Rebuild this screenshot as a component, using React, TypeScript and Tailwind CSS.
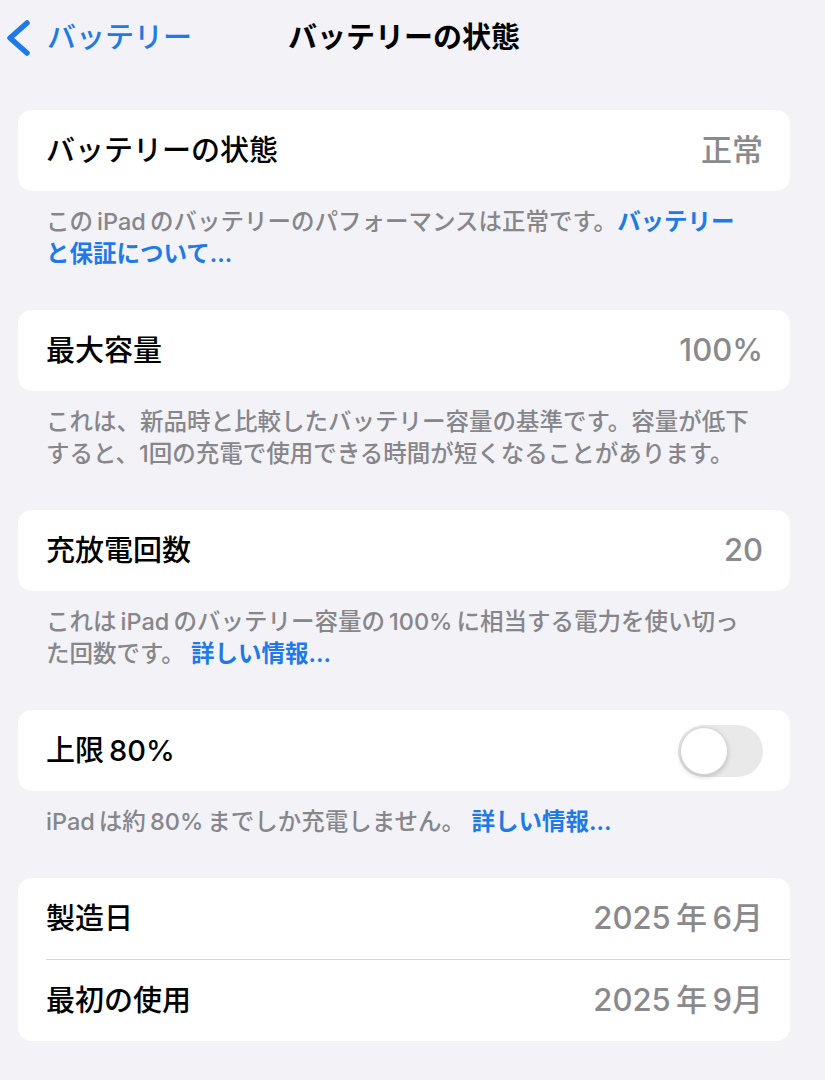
import React from 'react';

const FONT = { fontFamily: 'Inter, "Noto Sans CJK JP", sans-serif' };

function Row({ label, value, children }: { label: string; value?: string; children?: React.ReactNode }) {
  return (
    <div className="flex h-[81px] items-center justify-between pl-[28px] pr-[27px]">
      <span className="text-[29px] font-medium text-black">{label}</span>
      {value && <span className="text-[31px] font-medium text-[#8a8a8e]">{value}</span>}
      {children}
    </div>
  );
}

function Footer({ children }: { children: React.ReactNode }) {
  return (
    <p className="px-[46px] pt-[15px] pb-[40px] text-[23.5px] leading-[32px] font-medium text-[#86868b]">{children}</p>
  );
}

function Link({ children }: { children: React.ReactNode }) {
  return <span className="font-semibold text-[#1f7ae8]">{children}</span>;
}

function Toggle() {
  return (
    <div className="flex h-[52px] w-[85px] items-center rounded-full bg-[#e9e9ea] p-[2px]">
      <div className="h-[48px] w-[48px] rounded-full border border-[#d6d6d6] bg-white shadow-[0_2px_5px_rgba(0,0,0,0.18)]" />
    </div>
  );
}

export default function App() {
  return (
    <div className="min-h-[1080px] w-[825px] bg-[#f2f2f7]" style={FONT}>
      <div className="w-[808px]">
        <header className="relative flex h-[75px] items-center">
          <button className="flex items-center gap-[14px] pl-[5px] text-[29px] font-medium text-[#1f7ae8]">
            <svg width="28" height="38" viewBox="0 0 28 38" fill="none">
              <path d="M22 4 L5 19 L22 34" stroke="#1f7ae8" strokeWidth="5.5" strokeLinecap="round" strokeLinejoin="round" />
            </svg>
            <span>バッテリー</span>
          </button>
          <h1 className="absolute left-1/2 -translate-x-1/2 text-[29px] font-bold text-black">バッテリーの状態</h1>
        </header>

        <div className="mt-[35px]">
          <div className="mx-[18px] rounded-[14px] bg-white">
            <Row label="バッテリーの状態" value="正常" />
          </div>
          <Footer>
            この{'\u2009'}iPad{'\u2009'}のバッテリーのパフォーマンスは正常です。<Link>バッテリー<br />と保証について...</Link>
          </Footer>

          <div className="mx-[18px] rounded-[14px] bg-white">
            <Row label="最大容量" value="100%" />
          </div>
          <Footer>
            これは、新品時と比較したバッテリー容量の基準です。容量が低下<br />
            すると、1回の充電で使用できる時間が短くなることがあります。
          </Footer>

          <div className="mx-[18px] rounded-[14px] bg-white">
            <Row label="充放電回数" value="20" />
          </div>
          <Footer>
            これは{'\u2009'}iPad{'\u2009'}のバッテリー容量の{'\u2009'}100%{'\u2009'}に相当する電力を使い切っ<br />
            た回数です。 <Link>詳しい情報...</Link>
          </Footer>

          <div className="mx-[18px] rounded-[14px] bg-white">
            <Row label={'上限\u200980%'}>
              <Toggle />
            </Row>
          </div>
          <Footer>
            iPad{'\u2009'}は約{'\u2009'}80%{'\u2009'}までしか充電しません。 <Link>詳しい情報...</Link>
          </Footer>

          <div className="mx-[18px] rounded-[14px] bg-white">
            <Row label="製造日" value={'2025\u2009年\u20096月'} />
            <div className="ml-[28px] h-px bg-[#d8d8dc]" />
            <Row label="最初の使用" value={'2025\u2009年\u20099月'} />
          </div>
        </div>
      </div>
    </div>
  );
}
